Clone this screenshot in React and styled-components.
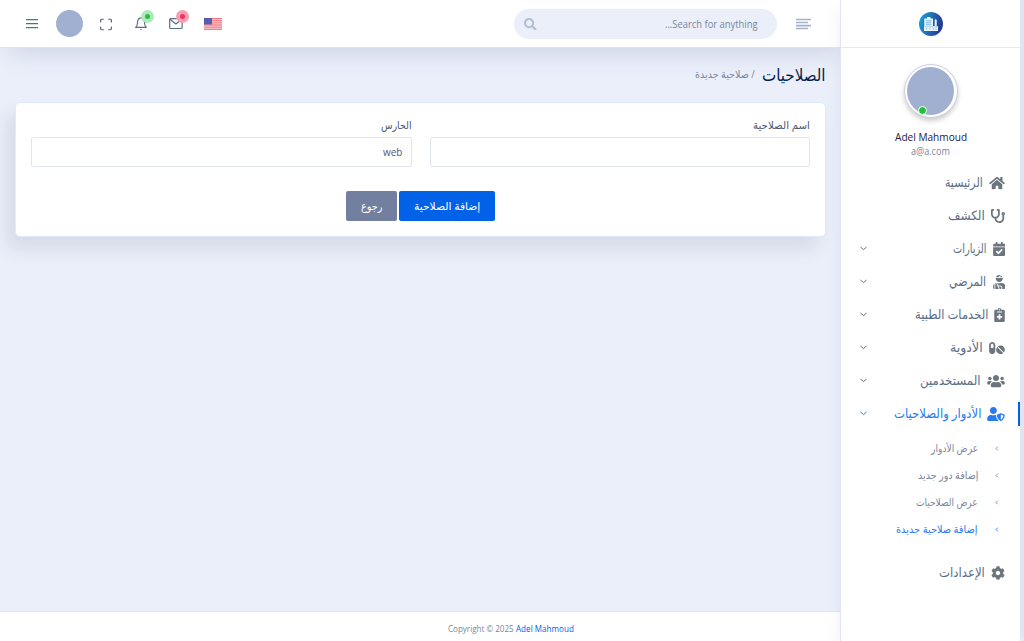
import React, { useLayoutEffect, useRef, useState } from "react";
import styled, { createGlobalStyle, css } from "styled-components";
import {
  FaHome, FaStethoscope, FaCalendarCheck, FaUserInjured, FaNotesMedical,
  FaPills, FaUsers, FaUserShield, FaCog, FaSearch,
} from "react-icons/fa";

const GlobalStyle = createGlobalStyle`
  * { box-sizing: border-box; }
  html, body { margin: 0; height: 641px; overflow: hidden; }
  body {
    background: #ebeffa;
    color: #4d5875;
    font: 11px "Open Sans", "DejaVu Sans", sans-serif;
  }
`;

const FitBox = styled.span`
  display: inline-block;
  flex: none;
  width: ${(p) => p.$w}px;
  line-height: 1.5;
  font-size: ${(p) => p.$size}px;
  font-weight: ${(p) => p.$weight || 400};
  color: ${(p) => p.$color || "inherit"};
  white-space: nowrap;
`;
const FitInner = styled.span`
  display: inline-block;
  transform-origin: ${(p) => (p.$ltr ? "left" : "right")} center;
`;

/* Text condensed to a set measure, keeping its height. */
function Fit({ w, size, weight, color, ltr, children }) {
  const ref = useRef(null);
  const [scale, setScale] = useState(1);
  useLayoutEffect(() => {
    setScale(w / ref.current.offsetWidth);
  }, [w, children]);
  return (
    <FitBox $w={w} $size={size} $weight={weight} $color={color} dir={ltr ? "ltr" : "rtl"}>
      <FitInner ref={ref} $ltr={ltr} style={{ transform: `scaleX(${scale})` }}>{children}</FitInner>
    </FitBox>
  );
}

const Page = styled.div`
  display: flex;
  width: 1024px;
  height: 641px;
`;
const Main = styled.div`
  display: flex;
  flex-direction: column;
  width: 840px;
`;
const Header = styled.header`
  display: flex;
  align-items: center;
  height: 48px;
  flex: none;
  padding: 0 29px 0 26px;
  background: #fff;
  border-bottom: 1px solid #dee4ef;
  box-shadow: 5px 7px 26px -5px rgba(67, 87, 133, 0.22);
`;
const Tools = styled.div`
  display: flex;
  align-items: center;
  height: 47px;
  color: #5b6e88;
  svg { display: block; flex: none; }
`;
const Avatar = styled.div`
  width: 27px;
  height: 27px;
  margin: 0 17px 0 18px;
  border-radius: 50%;
  background: #a1afd1;
`;
const Notice = styled.div`
  position: relative;
  display: flex;
  margin-left: ${(p) => p.$gap}px;
`;
const Pulse = styled.span`
  position: absolute;
  left: ${(p) => p.$x}px;
  top: ${(p) => p.$y}px;
  display: flex;
  width: 13px;
  height: 13px;
  padding: 4px;
  border-radius: 50%;
  background: ${(p) => p.$halo};
  &::after {
    content: "";
    width: 5px;
    height: 5px;
    border-radius: 50%;
    background: ${(p) => p.$color};
  }
`;
const Flag = styled.svg`
  margin-left: 21.5px;
`;
const Search = styled.div`
  display: flex;
  align-items: center;
  justify-content: space-between;
  width: 263px;
  height: 30px;
  margin-left: auto;
  padding: 1px 19px 0 10px;
  border-radius: 15px;
  background: #ebeffa;
  color: #b2bcd3;
`;
const LinesIcon = styled.svg`
  margin-left: 19px;
`;

const Content = styled.main`
  flex: 1;
  padding: 15px 14px 0 15px;
`;
const Crumbs = styled.div`
  display: flex;
  direction: rtl;
  align-items: center;
  height: 24px;
  gap: 7px;
`;
const Card = styled.section`
  direction: rtl;
  width: 811px;
  height: 135px;
  margin-top: 15px;
  padding: 13px 15px 15px;
  background: #fff;
  border: 1px solid #deebfd;
  border-radius: 5px;
  box-shadow: -8px 12px 18px 0 rgba(25, 42, 70, 0.1);
`;
const Fields = styled.div`
  display: flex;
  justify-content: space-between;
`;
const Field = styled.label`
  display: flex;
  flex-direction: column;
  width: ${(p) => p.$w}px;
`;
const LabelRow = styled.div`
  display: flex;
  align-items: center;
  height: 18px;
  margin-bottom: 3px;
`;
const Input = styled.div`
  display: flex;
  align-items: center;
  height: 30px;
  padding: 0 9px;
  border: 1px solid #e1e5ef;
  border-radius: 2px;
`;
const Actions = styled.div`
  display: flex;
  justify-content: center;
  gap: 2px;
  margin-top: 24px;
`;
const Button = styled.button`
  display: flex;
  align-items: center;
  justify-content: center;
  width: ${(p) => p.$w}px;
  height: 30px;
  padding: 0;
  border: 0;
  border-radius: 2px;
  font-family: inherit;
  color: #fff;
  background: ${(p) => (p.$primary ? "#0162e8" : "#737f9e")};
`;
const Footer = styled.footer`
  display: flex;
  align-items: center;
  justify-content: center;
  gap: 2px;
  height: 30px;
  padding: 5px 0 0 181px;
  background: #fff;
  border-top: 1px solid #e0e6f1;
  color: #7987a1;
`;

const Sidebar = styled.aside`
  direction: rtl;
  width: 180px;
  height: 641px;
  background: #fff;
  border-left: 1px solid #e3e6f0;
  box-shadow: 0 8px 14px rgba(154, 154, 204, 0.15);
`;
const Scroll = styled.div`
  position: relative;
  width: 4px;
  height: 637px;
  background: #e1e4f1;
`;
const Brand = styled.div`
  display: flex;
  align-items: center;
  justify-content: center;
  height: 48px;
  border-bottom: 1px solid #e6e8f1;
`;
const Profile = styled.div`
  display: flex;
  flex-direction: column;
  align-items: center;
  height: 118px;
  padding-top: 16px;
`;
const Portrait = styled.div`
  position: relative;
  width: 54px;
  height: 54px;
  border: 1px solid #c9d0e8;
  border-radius: 50%;
  padding: 2px;
  background: #fff;
  box-shadow: 0 3px 5px rgba(0, 0, 0, 0.2);
  &::before {
    content: "";
    display: block;
    width: 47px;
    height: 48px;
    margin-right: 1px;
    border-radius: 50%;
    background: #a1afd1;
  }
`;
const Online = styled.span`
  position: absolute;
  left: 13px;
  top: 41px;
  width: 9px;
  height: 9px;
  border: 1px solid #fff;
  border-radius: 50%;
  background: #22c03c;
`;
const ProfileText = styled.div`
  display: flex;
  height: ${(p) => p.$h}px;
  align-items: center;
  margin-top: ${(p) => p.$mt || 0}px;
`;
const Item = styled.div`
  display: flex;
  align-items: center;
  position: relative;
  height: 33px;
  padding: 0 15px 0 19px;
  gap: 6px;
  color: ${(p) => (p.$active ? "#287bee" : "#5b6e88")};
  ${(p) => p.$active && css`
    &::after {
      content: "";
      position: absolute;
      right: 0;
      top: 5px;
      width: 2px;
      height: 24px;
      background: #0162e8;
    }
  `}
`;
const ItemIcon = styled.span`
  display: flex;
  color: ${(p) => (p.$active ? "#287bee" : "#6c757d")};
  svg { width: ${(p) => p.$w}px; height: 14px; }
`;
const Chevron = styled.svg`
  margin-right: auto;
`;
const Submenu = styled.div`
  padding: 5px 0 13px;
`;
const SubItem = styled.div`
  display: flex;
  align-items: center;
  height: 27px;
  padding-right: 21px;
  gap: 17px;
  color: ${(p) => (p.$active ? "#287bee" : "#7c8698")};
`;

const menu = [
  { icon: FaHome, iw: 16, text: "الرئيسية", w: 38 },
  { icon: FaStethoscope, iw: 14, text: "الكشف", w: 37 },
  { icon: FaCalendarCheck, iw: 12.5, text: "الزيارات", w: 33, more: true },
  { icon: FaUserInjured, iw: 12.5, text: "المرضي", w: 37, more: true },
  { icon: FaNotesMedical, iw: 11, text: "الخدمات الطبية", w: 73, more: true },
  { icon: FaPills, iw: 16, text: "الأدوية", w: 33, more: true },
  { icon: FaUsers, iw: 18, text: "المستخدمين", w: 61, more: true },
  { icon: FaUserShield, iw: 18, text: "الأدوار والصلاحيات", w: 87, more: true, active: true },
];
const submenu = [
  { text: "عرض الأدوار", w: 47 },
  { text: "إضافة دور جديد", w: 60 },
  { text: "عرض الصلاحيات", w: 62 },
  { text: "إضافة صلاحية جديدة", w: 82, active: true },
];

function MenuItem({ icon: Icon, iw, text, w, more, active }) {
  return (
    <Item $active={active}>
      <ItemIcon $w={iw} $active={active}><Icon /></ItemIcon>
      <Fit w={w} size={13}>{text}</Fit>
      {more && (
        <Chevron width="7" height="5" viewBox="0 0 7 5" fill="none" stroke="currentColor" strokeWidth="1">
          <path d="M.5 1 3.500 3.600 6.500 1" />
        </Chevron>
      )}
    </Item>
  );
}

function Logo() {
  return (
    <svg width="24" height="24" viewBox="0 0 24 24">
      <defs>
        <linearGradient id="brand" x1="0" y1="0.3" x2="1" y2="0.6">
          <stop offset="0" stopColor="#1ba0d8" />
          <stop offset="1" stopColor="#27348b" />
        </linearGradient>
      </defs>
      <circle cx="12" cy="12" r="12" fill="url(#brand)" />
      <path d="M5.3 6.500H8V5h3.500v1.500H14V14H5.300z" fill="#e8f5fc" />
      <path d="M7 8.800h5.500M7 10.800h5.500M7 12.800h5.500" stroke="#268fc9" strokeWidth=".6" />
      <path d="M15.700 8.500l1-1.700 1 1.700V14h-2z" fill="#e8f5fc" />
      <path d="M5 14.200h14v4.800H5z" fill="#e8f5fc" />
      <path d="M6.500 16h2M7.500 16v2M10 16h1.500M10 17h1.500M13 16h1.500v2M16 16h2M17 16v2" stroke="#8fbbe0" strokeWidth=".6" fill="none" />
    </svg>
  );
}

export default function App() {
  return (
    <>
      <GlobalStyle />
      <Page>
        <Main>
          <Header>
            <Tools>
              <svg width="12" height="10" viewBox="0 0 12 10" stroke="currentColor" strokeWidth="1.200">
                <path d="M0 .7h12M0 4.700h12M0 8.700h12" />
              </svg>
              <Avatar />
              <svg width="12" height="12" viewBox="0 0 12 12" fill="none" stroke="currentColor" strokeWidth="1.300" strokeLinecap="round" transform="translate(0 .5)">
                <path d="M.6 3.400V2A1.400 1.400 0 0 1 2 .6h1.400M8.600.6H10A1.400 1.400 0 0 1 11.400 2v1.400M11.400 8.600V10a1.400 1.400 0 0 1-1.400 1.400H8.600M3.400 11.400H2A1.400 1.400 0 0 1 .6 10V8.600" />
              </svg>
              <Notice $gap={23}>
                <svg width="12" height="14" viewBox="0 0 12 14" fill="none" stroke="currentColor" strokeWidth="1.200" strokeLinejoin="round">
                  <path d="M.7 10.300h10.600C9.600 9.200 9.700 7.500 9.500 5.500 9.300 2.300 8.300.8 6 .8S2.700 2.300 2.500 5.500C2.300 7.500 2.400 9.200.7 10.300z" />
                  <path d="M4.700 12.300a1.500 1.500 0 0 0 2.600 0z" fill="currentColor" stroke="none" />
                </svg>
                <Pulse $x={6} $y={-6.5} $color="#22c03c" $halo="#b0e9b9" />
              </Notice>
              <Notice $gap={21.5}>
                <svg width="14" height="12" viewBox="0 0 14 12" fill="none" stroke="currentColor" strokeWidth="1.200" strokeLinejoin="round">
                  <rect x=".7" y=".6" width="12.400" height="9.900" rx="1" />
                  <path d="M1 1.200 6.900 6 12.800 1.200" />
                </svg>
                <Pulse $x={7} $y={-7.5} $color="#ee335e" $halo="#f5a0b0" />
              </Notice>
              <Flag width="18" height="12" viewBox="0 0 18 12">
                <rect width="18" height="12" fill="#fbd5da" />
                <path d="M0 .5h18M0 2.400h18M0 4.200h18M0 6.100h18M0 7.900h18M0 9.800h18M0 11.600h18" stroke="#f0707d" strokeWidth=".95" />
                <rect width="8" height="6.500" fill="#5258a6" />
                <path d="M1 1.500h7M1 3.300h7M1 5.100h7" stroke="#8087c0" strokeWidth=".5" strokeDasharray=".7 .8" />
              </Flag>
            </Tools>
            <Search>
              <FaSearch size={12.5} />
              <Fit w={93} size={11} color="#7886a0">Search for anything...</Fit>
            </Search>
            <LinesIcon width="15" height="11" viewBox="0 0 15 11" stroke="#a5b0c9" strokeWidth="1.700" transform="translate(0 .5)">
              <path d="M0 .9h15M0 4h12M0 7.100h15M0 10.100h12" />
            </LinesIcon>
          </Header>
          <Content>
            <Crumbs>
              <Fit w={64} size={16.5} color="#031b4e">الصلاحيات</Fit>
              <Fit w={60} size={10.5} color="#7987a1">/ صلاحية جديدة</Fit>
            </Crumbs>
            <Card>
              <Fields>
                <Field $w={380}>
                  <LabelRow><Fit w={57} size={11}>اسم الصلاحية</Fit></LabelRow>
                  <Input />
                </Field>
                <Field $w={381}>
                  <LabelRow><Fit w={31} size={11}>الحارس</Fit></LabelRow>
                  <Input><Fit w={19} size={11}>web</Fit></Input>
                </Field>
              </Fields>
              <Actions>
                <Button $primary $w={96}><Fit w={66} size={11}>إضافة الصلاحية</Fit></Button>
                <Button $w={51}><Fit w={21} size={11}>رجوع</Fit></Button>
              </Actions>
            </Card>
          </Content>
          <Footer>
            <Fit w={66} size={9.5} ltr>Copyright © 2025</Fit>
            <Fit w={58} size={9.5} ltr color="#0162e8">Adel Mahmoud</Fit>
          </Footer>
        </Main>
        <Sidebar>
          <Brand><Logo /></Brand>
          <Profile>
            <Portrait><Online /></Portrait>
            <ProfileText $h={16} $mt={11}><Fit w={72} size={11.5} ltr color="#242043">Adel Mahmoud</Fit></ProfileText>
            <ProfileText $h={12}><Fit w={39} size={10} ltr color="#7987a1">a@a.com</Fit></ProfileText>
          </Profile>
          {menu.map((m) => <MenuItem key={m.text} {...m} />)}
          <Submenu>
            {submenu.map((s) => (
              <SubItem key={s.text} $active={s.active}>
                <svg width="4" height="5" viewBox="0 0 4 5" fill="none" stroke="currentColor" strokeWidth=".9">
                  <path d="M2.800 .7 1 2.500 2.800 4.300" />
                </svg>
                <Fit w={s.w} size={10.5}>{s.text}</Fit>
              </SubItem>
            ))}
          </Submenu>
          <MenuItem icon={FaCog} iw={14} text="الإعدادات" w={46} />
        </Sidebar>
        <Scroll />
      </Page>
    </>
  );
}
